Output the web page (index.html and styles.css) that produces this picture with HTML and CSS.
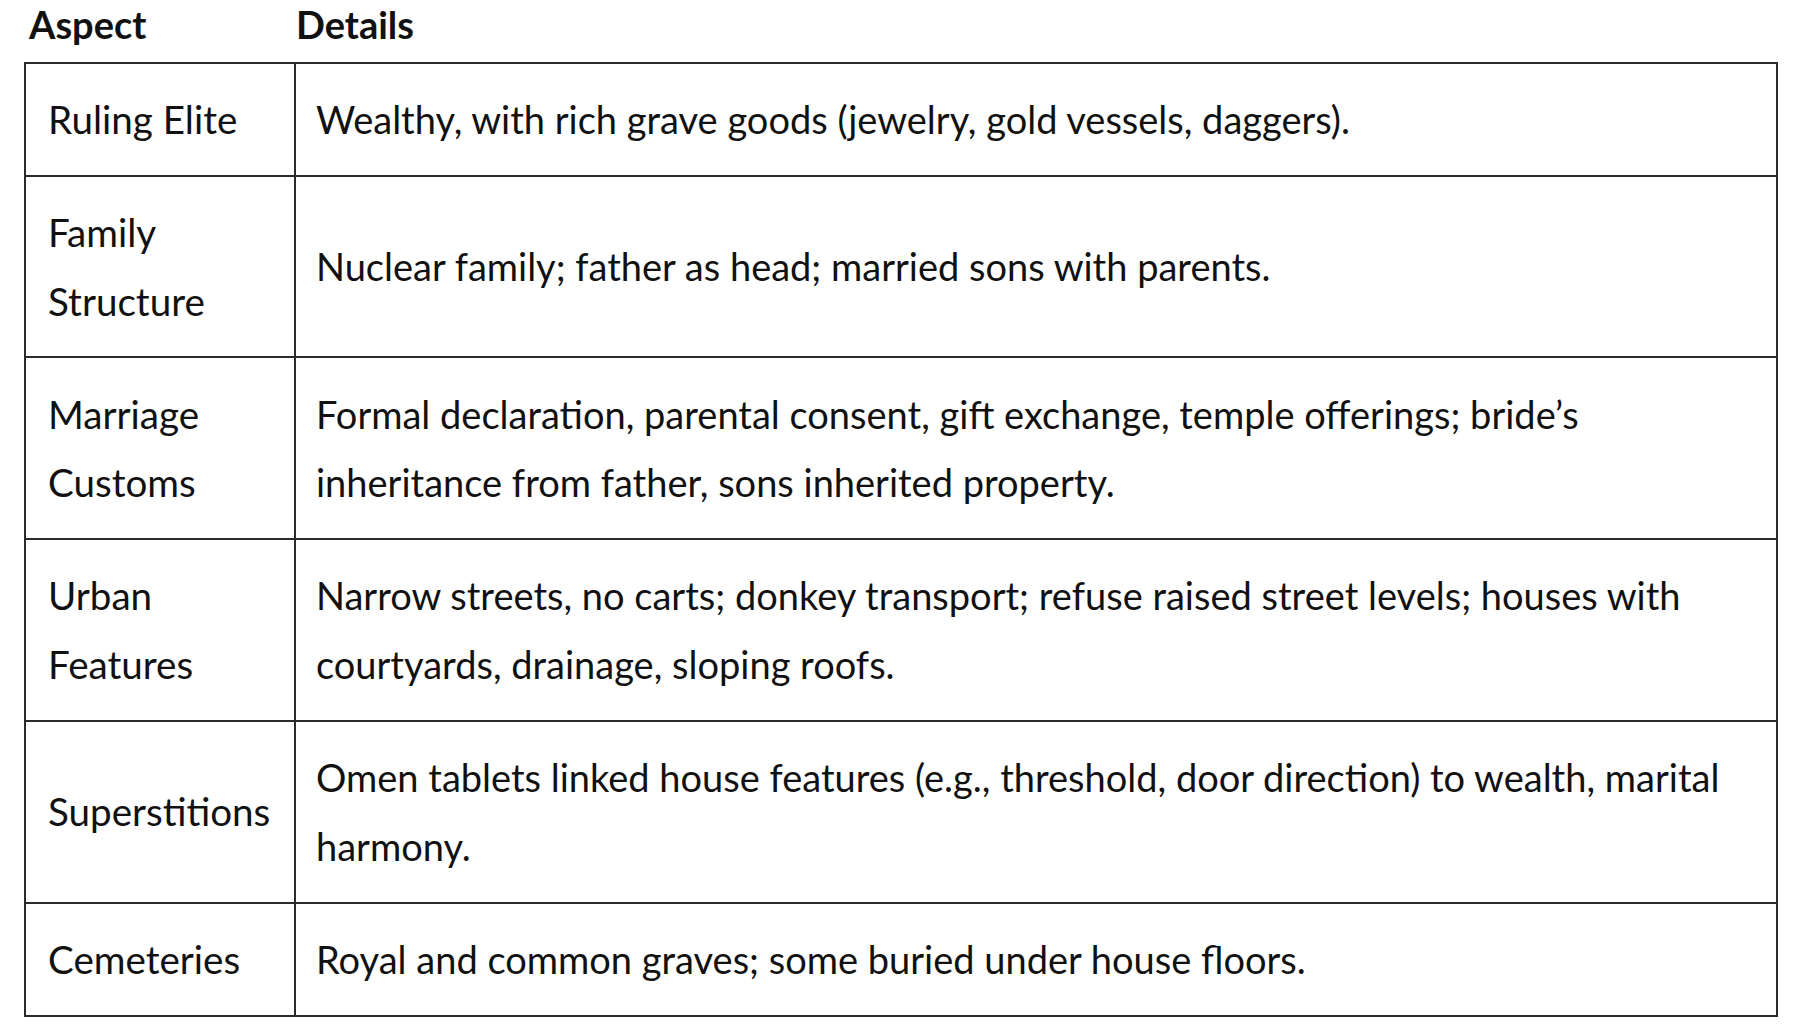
FILE: index.html
```html
<!DOCTYPE html>
<html lang="en">
<head>
<meta charset="utf-8">
<title>Aspect / Details</title>
<link rel="stylesheet" href="styles.css">
</head>
<body>
<div class="page">
  <table class="info-table">
    <colgroup>
      <col class="col-aspect">
      <col class="col-details">
    </colgroup>
    <thead>
      <tr>
        <th class="th-aspect">Aspect</th>
        <th class="th-details">Details</th>
      </tr>
    </thead>
    <tbody>
      <tr>
        <td class="aspect">Ruling Elite</td>
        <td class="details">Wealthy, with rich grave goods (jewelry, gold vessels, daggers).</td>
      </tr>
      <tr>
        <td class="aspect">Family Structure</td>
        <td class="details">Nuclear family; father as head; married sons with parents.</td>
      </tr>
      <tr>
        <td class="aspect">Marriage Customs</td>
        <td class="details">Formal declaration, parental consent, gift exchange, temple offerings; bride’s inheritance from father, sons inherited property.</td>
      </tr>
      <tr>
        <td class="aspect">Urban Features</td>
        <td class="details">Narrow streets, no carts; donkey transport; refuse raised street levels; houses with courtyards, drainage, sloping roofs.</td>
      </tr>
      <tr>
        <td class="aspect">Superstitions</td>
        <td class="details">Omen tablets linked house features (e.g., threshold, door direction) to wealth, marital harmony.</td>
      </tr>
      <tr>
        <td class="aspect">Cemeteries</td>
        <td class="details">Royal and common graves; some buried under house floors.</td>
      </tr>
    </tbody>
  </table>
</div>
</body>
</html>
```

FILE: styles.css
```css
html, body {
  margin: 0;
  padding: 0;
  background: #ffffff;
}

body {
  font-family: Lato, "Open Sans", "Liberation Sans", sans-serif;
  color: #111111;
}

.page {
  padding: 2px 16px 0 24px;
}

.info-table {
  width: 100%;
  border-collapse: collapse;
  table-layout: fixed;
  font-size: 38px;
}

.col-aspect {
  width: 270px;
}

.info-table th {
  text-align: left;
  font-weight: 700;
  line-height: 1.2;
  padding: 0 3px 14px;
  border: none;
}

.info-table .th-aspect {
  padding-left: 4px;
}

.info-table .th-details {
  padding-left: 1px;
}

.info-table td {
  border: 2px solid #2b2b2b;
  padding: 21.15px 21px 21.15px 22px;
  line-height: 68.75px;
  vertical-align: middle;
}

.info-table td.aspect {
  font-size: 38.6px;
  padding-right: 18px;
}

.info-table td.details {
  padding-left: 20px;
}
```
